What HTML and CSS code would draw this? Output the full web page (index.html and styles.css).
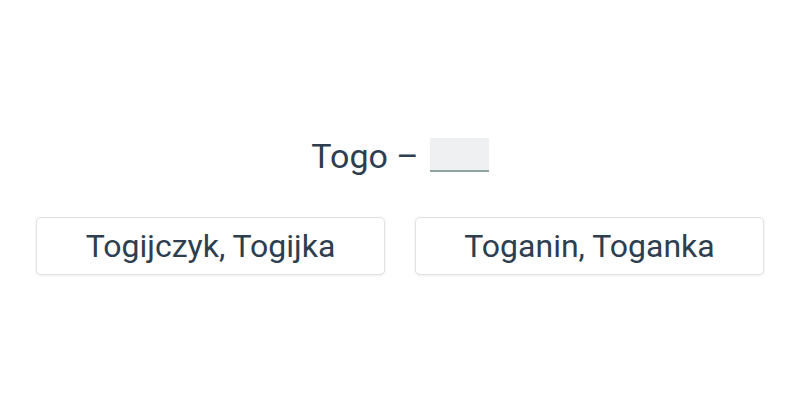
FILE: index.html
```html
<!DOCTYPE html>
<html lang="pl-PL">
<head>
    <meta charset="UTF-8">
    <meta name="viewport" content="width=device-width, initial-scale=1.0">
    <title>Quiz</title>
    <link rel="stylesheet" href="styles.css">
</head>
<body>
    <div class="quiz">
        <div class="pytanie">
            <span class="tresc">Togo &ndash;</span><span class="luka"></span>
        </div>
        <div class="odpowiedzi">
            <button class="odpowiedz">Togijczyk, Togijka</button>
            <button class="odpowiedz">Toganin, Toganka</button>
        </div>
    </div>
</body>
</html>
```

FILE: styles.css
```css
body {
    margin: 0;
    padding: 0;
    background-color: #FFF;
    font-family: Roboto, "Noto Sans", sans-serif;
    color: #2c3e50;
}

.quiz {
    height: 400px;
    display: flex;
    flex-direction: column;
    justify-content: center;
    padding: 8px 36px 0 36px;
    box-sizing: border-box;
}

.pytanie {
    display: flex;
    justify-content: center;
    align-items: center;
    font-size: 34px;
    margin: 0 0 41px 0;
}

.tresc {
    padding-top: 3px;
}

.luka {
    display: inline-block;
    width: 59px;
    height: 34px;
    margin-left: 11px;
    background-color: #eef0f2;
    border-bottom: 2px solid #8fa39f;
    box-sizing: border-box;
}

.odpowiedzi {
    display: flex;
    gap: 30px;
}

.odpowiedz {
    flex: 1;
    height: 58px;
    background-color: #FFF;
    border: 1px solid #dfe1e3;
    border-radius: 5px;
    box-shadow: 0 1px 3px rgba(0, 0, 0, 0.08);
    font-family: inherit;
    font-size: 32px;
    color: #2c3e50;
    padding: 0;
}
```
